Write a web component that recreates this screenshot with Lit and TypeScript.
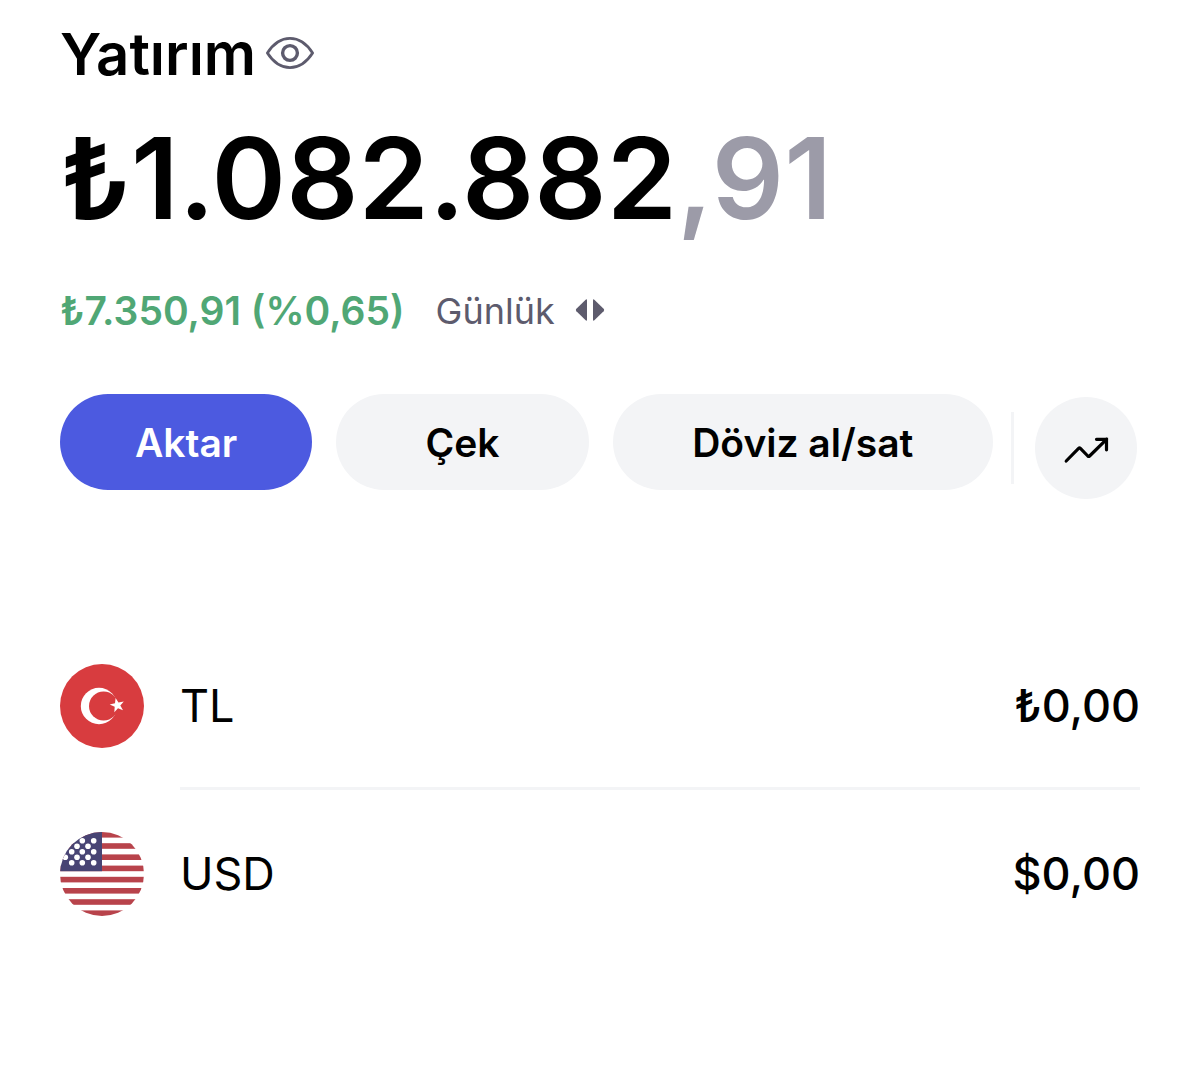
import { LitElement, html, css, svg } from "lit";
import { customElement } from "lit/decorators.js";

const turkeyFlag = html`<svg class="flag" viewBox="0 0 84 84" aria-hidden="true">
  <circle cx="42" cy="42" r="42" fill="#d83c3f" />
  <circle cx="39" cy="42" r="18.2" fill="#fff" />
  <circle cx="43.6" cy="42" r="14.6" fill="#d83c3f" />
  <path fill="#fff" d="M49.7 40.6L55 39.3L55.6 33.9L58.5 38.5L63.8 37.4L60.3 41.6L63 46.3L58 44.2L54.3 48.3L54.7 42.8z" />
</svg>`;

const starCentres = [
  [22.3, 8.7], [33.7, 8.7],
  [17, 14.3], [28, 14.3],
  [11.7, 19.7], [22.3, 19.7], [33.7, 19.7],
  [5.3, 25.3], [17, 25.3], [28, 25.3],
  [11.7, 30.7], [22.3, 30.7], [33.7, 30.7],
];
const stripes = [0, 11.2, 22.4, 33.6, 44.8, 56, 67.2, 78.4];

const usaFlag = html`<svg class="flag" viewBox="0 0 84 84" aria-hidden="true">
  <defs><clipPath id="disc"><circle cx="42" cy="42" r="42" /></clipPath></defs>
  <g clip-path="url(#disc)">
    <rect width="84" height="84" fill="#fff" />
    ${stripes.map((y) => svg`<rect y=${y} width="84" height="5.6" fill="#b8434b" />`)}
    <rect width="42" height="39.2" fill="#484474" />
    ${starCentres.map(([x, y]) => svg`<circle cx=${x} cy=${y} r="2.8" fill="#fff" />`)}
  </g>
</svg>`;

const accounts = [
  { name: "TL", amount: "₺0,00", flag: turkeyFlag },
  { name: "USD", amount: "$0,00", flag: usaFlag },
];

@customElement("app-root")
export class AppRoot extends LitElement {
  static styles = css`
    :host {
      display: block;
      box-sizing: border-box;
      min-height: 100vh;
      padding: 24px 58px 24px 60px;
      background: #fff;
      color: #000;
      font-family: Inter, "Liberation Sans", sans-serif;
    }
    h1, p, ul { margin: 0; padding: 0; }
    button {
      border: 0;
      padding: 0;
      background: none;
      color: inherit;
      font: inherit;
      cursor: pointer;
    }
    svg { display: block; }
    .title-row { display: flex; align-items: center; gap: 9px; }
    .title { font-size: 58px; font-weight: 600; line-height: 60px; }
    .reveal { padding-bottom: 2px; }
    .eye { width: 50px; height: 34px; }
    .balance {
      margin-top: 34px;
      font-size: 113px;
      font-weight: 600;
      line-height: 120px;
      white-space: nowrap;
    }
    .cents { color: #9c9ba8; }
    .change-row {
      display: flex;
      align-items: center;
      gap: 31px;
      margin-top: 53px;
      line-height: 40px;
      white-space: nowrap;
    }
    .change { color: #50a775; font-size: 39px; font-weight: 600; }
    .period {
      display: flex;
      align-items: center;
      gap: 20px;
      color: #5d5b6d;
      font-size: 36px;
    }
    .arrows { width: 30px; height: 24px; }
    .actions { display: flex; align-items: flex-start; margin-top: 63px; }
    .pills {
      flex: 1;
      display: grid;
      grid-template-columns: 252fr 252fr 380fr;
      gap: 24px;
    }
    .pill {
      height: 96px;
      border-radius: 48px;
      background: #f3f4f6;
      font-size: 39px;
      font-weight: 600;
      white-space: nowrap;
    }
    .primary { background: #4c5ae0; color: #fff; }
    .side { display: flex; align-items: center; padding: 3px 3px 0 18px; gap: 21px; }
    .divider { width: 3px; height: 72px; background: #f3f4f6; }
    .chart {
      display: grid;
      place-items: center;
      width: 102px;
      height: 102px;
      border-radius: 50%;
      background: #f3f4f6;
    }
    .trend { width: 48px; height: 32px; }
    .accounts { margin-top: 123px; list-style: none; }
    .account { display: flex; align-items: stretch; gap: 36px; height: 168px; }
    .flag { width: 84px; height: 84px; align-self: center; }
    .entry {
      flex: 1;
      display: flex;
      align-items: center;
      justify-content: space-between;
      padding-bottom: 2px;
      font-size: 45px;
      box-shadow: inset 0 -3px #f3f4f6;
    }
    .account:last-child .entry { box-shadow: none; }
    .amount { font-weight: 500; }
  `;

  render() {
    return html`
      <header class="title-row">
        <h1 class="title">Yatırım</h1>
        <button class="reveal" aria-label="Bakiyeyi gizle">
          <svg class="eye" viewBox="0 0 50 34" fill="none" stroke="#5d5b6d" aria-hidden="true">
            <path stroke-width="2.8" stroke-linejoin="round" d="M2.4 17C8.5 7.5 16 2.4 25 2.4S41.5 7.5 47.6 17C41.5 26.5 34 31.6 25 31.6S8.5 26.5 2.4 17z" />
            <circle cx="25" cy="17" r="7.4" stroke-width="3.4" />
          </svg>
        </button>
      </header>
      <p class="balance">₺1.082.882<span class="cents">,91</span></p>
      <div class="change-row">
        <span class="change">₺7.350,91 (%0,65)</span>
        <button class="period">
          Günlük
          <svg class="arrows" viewBox="0 0 30 24" fill="#5d5b6d" aria-hidden="true">
            <path d="M12 1.5V20.5Q12 22.5 10.4 21.1L1.4 12.2Q.4 11 1.4 9.8L10.4 .9Q12 -.5 12 1.5z" />
            <path d="M18 1.5V20.5Q18 22.5 19.6 21.1L28.6 12.2Q29.6 11 28.6 9.8L19.6 .9Q18 -.5 18 1.5z" />
          </svg>
        </button>
      </div>
      <div class="actions">
        <div class="pills">
          <button class="pill primary">Aktar</button>
          <button class="pill">Çek</button>
          <button class="pill">Döviz al/sat</button>
        </div>
        <div class="side">
          <span class="divider"></span>
          <button class="chart" aria-label="Grafik">
            <svg class="trend" viewBox="0 0 48 32" fill="none" stroke="#000" stroke-width="3.2" stroke-linecap="round" stroke-linejoin="round" aria-hidden="true">
              <path d="M4.2 29L16.6 16.400Q17.500 15.600 18.400 16.400L25.800 24Q26.700 24.800 27.600 24L44.500 7.300" />
              <path stroke-linejoin="miter" d="M34.500 7.300H44.500V17.800" />
            </svg>
          </button>
        </div>
      </div>
      <ul class="accounts">
        ${accounts.map(
          (a) => html`<li class="account">
            ${a.flag}
            <div class="entry"><span>${a.name}</span><span class="amount">${a.amount}</span></div>
          </li>`
        )}
      </ul>
    `;
  }
}
